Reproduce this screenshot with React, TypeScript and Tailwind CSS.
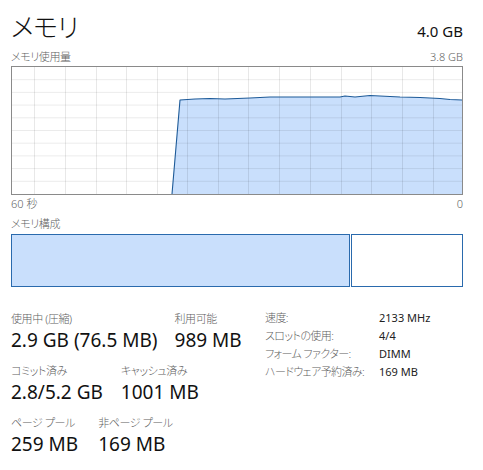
const GRID_X = [22, 53, 84, 114, 145, 175, 206, 236, 267, 298, 329, 359, 390, 421]
const GRID_Y = [1, 2, 3, 4, 5, 6, 7, 8, 9].map((i) => (127 / 10) * i)

// usage history, inner coordinates of the 450x127 chart
const POINTS: [number, number][] = [
  [160, 127],
  [168, 33],
  [183, 32],
  [198, 31.5],
  [213, 32],
  [238, 31],
  [258, 30],
  [288, 30],
  [328, 30],
  [333, 29],
  [343, 30],
  [358, 28.5],
  [368, 29],
  [388, 30],
  [408, 30.5],
  [428, 31.5],
  [438, 32.5],
  [451, 33],
]

function UsageChart() {
  const line = POINTS.map(([x, y]) => `${x},${y}`).join(' ')
  const fill = `${line} 451,127 160,127`

  return (
    <div className="h-[129px] border border-[#8a8a8a] bg-white">
      <svg className="block w-full h-full" viewBox="0 0 450 127" preserveAspectRatio="none">
        <polygon points={fill} fill="#c9dffc" />
        {GRID_X.map((x) => (
          <line key={`x${x}`} x1={x + 0.5} y1={0} x2={x + 0.5} y2={127} stroke="rgba(0,0,0,0.09)" strokeWidth={1} />
        ))}
        {GRID_Y.map((y) => (
          <line key={`y${y}`} x1={0} y1={y} x2={450} y2={y} stroke="rgba(0,0,0,0.08)" strokeWidth={1} />
        ))}
        <polyline points={line} fill="none" stroke="#1d5a98" strokeWidth={1.1} strokeLinejoin="round" />
      </svg>
    </div>
  )
}

interface StatProps {
  label: string
  value: string
}

function Stat({ label, value }: StatProps) {
  return (
    <div className="shrink-0">
      <div className="text-[11px] leading-[16px] tracking-[-0.4px] font-light text-[#5f5f5f]">{label}</div>
      <div className="text-[19px] leading-[26px] text-[#111]">{value}</div>
    </div>
  )
}

const DETAILS: [string, string][] = [
  ['速度:', '2133 MHz'],
  ['スロットの使用:', '4/4'],
  ['フォーム ファクター:', 'DIMM'],
  ['ハードウェア予約済み:', '169 MB'],
]

export default function App() {
  return (
    <div className="w-[483px] h-[470px] bg-white pl-[11px] pr-[20px] pt-[11px] font-['Noto_Sans','Noto_Sans_CJK_JP',sans-serif] [font-feature-settings:'palt'] overflow-hidden">
      <div className="flex items-baseline justify-between">
        <h1 className="text-[26px] leading-[32px] font-light tracking-[-0.5px] text-[#111]">メモリ</h1>
        <span className="text-[15px] text-[#111]">4.0 GB</span>
      </div>

      <div className="mt-[6px] flex justify-between text-[11px] leading-[16px] font-light text-[#5f5f5f]">
        <span className="tracking-[-0.4px]">メモリ使用量</span>
        <span>3.8 GB</span>
      </div>
      <div className="mt-[1px]">
        <UsageChart />
      </div>
      <div className="mt-[1px] flex justify-between text-[11px] leading-[16px] font-light text-[#5f5f5f]">
        <span>60 秒</span>
        <span>0</span>
      </div>

      <div className="mt-[4px] text-[11px] leading-[16px] tracking-[-0.4px] font-light text-[#5f5f5f]">メモリ構成</div>
      <div className="mt-[2px] flex h-[53px] gap-[1px]">
        <div className="w-[339px] border border-[#2a6aad] bg-[#c9dffc]" />
        <div className="flex-1 border border-[#2a6aad] bg-white" />
      </div>

      <div className="mt-[23px] flex">
        <div className="w-[243px] shrink-0 flex flex-col gap-[10px] pt-[1px]">
          <div className="flex gap-[17px]">
            <Stat label="使用中 (圧縮)" value="2.9 GB (76.5 MB)" />
            <Stat label="利用可能" value="989 MB" />
          </div>
          <div className="flex gap-[18px]">
            <Stat label="コミット済み" value="2.8/5.2 GB" />
            <Stat label="キャッシュ済み" value="1001 MB" />
          </div>
          <div className="flex gap-[20px]">
            <Stat label="ページ プール" value="259 MB" />
            <Stat label="非ページ プール" value="169 MB" />
          </div>
        </div>
        <div className="grid grid-cols-[114px_auto] ml-[11px] -mt-[1px] text-[11px] leading-[18px] self-start">
          {DETAILS.map(([k, v]) => (
            <div key={k} className="contents">
              <span className="text-[#5f5f5f] font-light tracking-[-0.6px] whitespace-nowrap">{k}</span>
              <span className="text-[#222]">{v}</span>
            </div>
          ))}
        </div>
      </div>
    </div>
  )
}
